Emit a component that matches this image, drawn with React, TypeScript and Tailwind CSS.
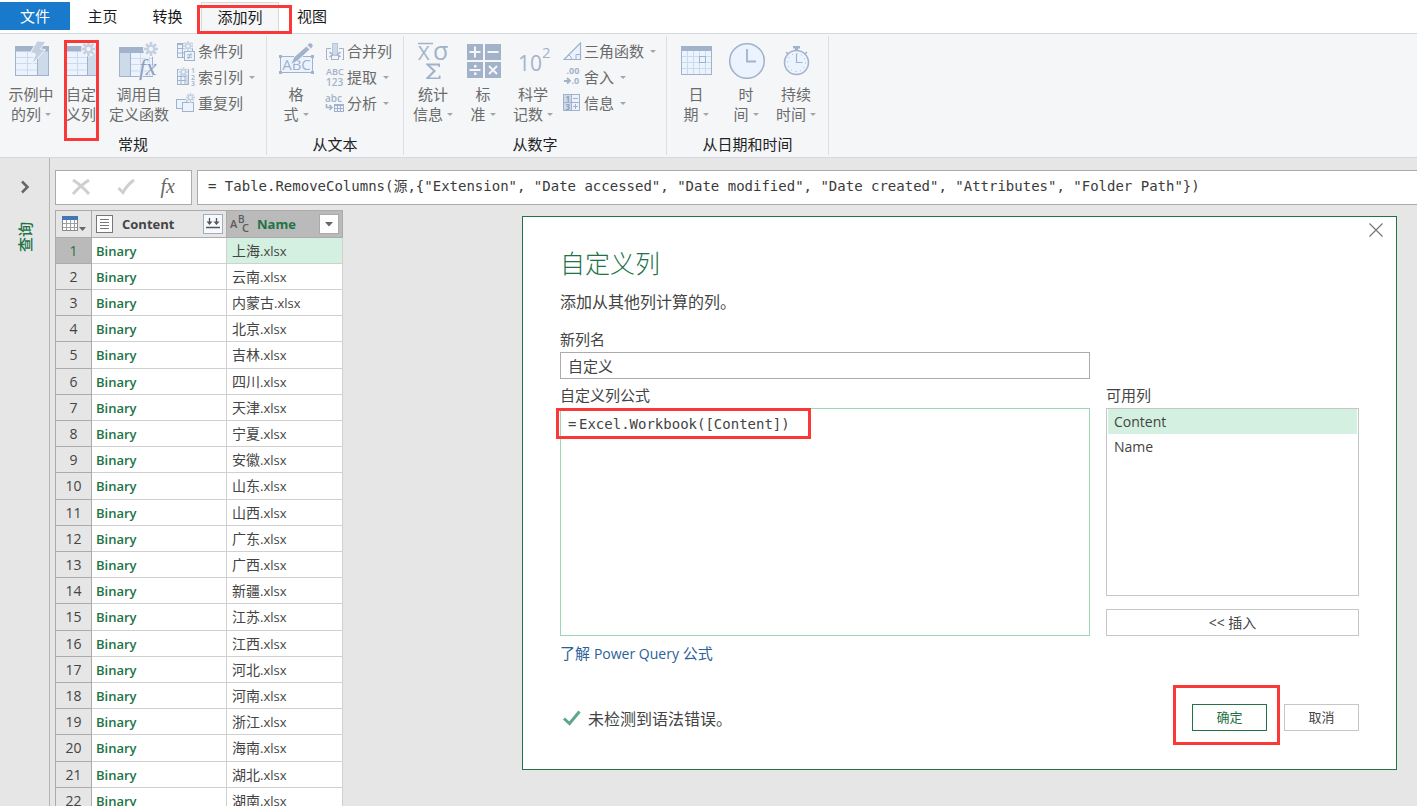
import React from "react";

const DARK = "#a3b2cb";
const MID = "#cddaea";
const LIGHT = "#eaf3fe";

function Spark({ x, y, r = 7 }: { x: number; y: number; r?: number }) {
  return (
    <g stroke="#c3d0e2" strokeWidth={r > 5 ? 2.6 : 1.6}>
      <circle cx={x} cy={y} r={r * 0.45} fill="none" strokeWidth={r * 0.28} />
      {[0, 45, 90, 135, 180, 225, 270, 315].map((a) => (
        <line key={a} x1={x} y1={y - r * 0.5} x2={x} y2={y - r} transform={`rotate(${a} ${x} ${y})`} />
      ))}
    </g>
  );
}

function Big({ children }: { children: React.ReactNode }) {
  return (
    <svg className="h-10 w-10 shrink-0 overflow-visible" viewBox="0 0 40 40" fill="none" aria-hidden="true">
      {children}
    </svg>
  );
}

function Small({ children }: { children: React.ReactNode }) {
  return (
    <svg className="h-5 w-5 shrink-0 overflow-visible" viewBox="0 0 20 20" fill="none" aria-hidden="true">
      {children}
    </svg>
  );
}

const ExampleIcon = () => (
  <Big>
    <rect x="4.5" y="7.5" width="33" height="28" fill={LIGHT} stroke={DARK} />
    <rect x="27" y="8" width="10" height="27" fill={MID} />
    <path d="M5 17.5h22M5 23.5h22M5 30h22M16.5 12v23" stroke={MID} />
    <path d="M26.5 12v23" stroke={DARK} />
    <rect x="4" y="6" width="34" height="5.5" fill={DARK} />
    <path d="M26 1L35 1.5L29.5 9L34.5 9.5L20.5 25L24.5 14L19.5 12.5Z" fill="#c3d0e2" stroke="#f4f6f8" />
  </Big>
);

const CustomIcon = () => (
  <Big>
    <rect x="3.5" y="7.5" width="33" height="28" fill={LIGHT} stroke={DARK} />
    <rect x="27" y="8" width="9" height="27" fill={MID} />
    <path d="M4 17.5h22M4 23.5h22M4 30h22M16.5 12v23" stroke={MID} />
    <path d="M26.5 12v23" stroke={DARK} />
    <rect x="3" y="6" width="34" height="5.5" fill={DARK} />
    <circle cx="27.5" cy="9" r="7.5" fill="#f4f6f8" />
    <Spark x={27.5} y={9} />
  </Big>
);

const InvokeIcon = () => (
  <Big>
    <rect x="0.5" y="8.5" width="33" height="28" fill={LIGHT} stroke={DARK} />
    <rect x="1" y="12" width="10" height="24" fill={MID} />
    <path d="M12 18.5h21M12 24.5h21M12 31h21M21.5 13v23M30.5 13v23" stroke={MID} />
    <path d="M11.5 13v23" stroke={DARK} />
    <rect x="0" y="7" width="34" height="6" fill={DARK} />
    <circle cx="32" cy="9" r="8" fill="#f4f6f8" />
    <Spark x={32} y={9} />
    <text x="20" y="34.500" fontFamily="Liberation Serif, serif" fontStyle="italic" fontSize="24" fill="#8f9fba" stroke="#eaf1fa" strokeWidth="1.500" paintOrder="stroke">fx</text>
  </Big>
);

const FormatIcon = () => (
  <Big>
    <rect x="4.5" y="16.5" width="32" height="16" fill={LIGHT} stroke={DARK} />
    <text x="20.500" y="30" textAnchor="middle" fontFamily="Open Sans, sans-serif" fontSize="15" fontWeight="500" fill={DARK}>ABC</text>
    <path d="M3 15h3v3H3zM35 15h3v3h-3zM3 31h3v3H3zM35 31h3v3h-3z" fill={DARK} />
    <path d="M14.500 25L18 17L30.500 6L34 9.500L21.500 21Z" fill={DARK} stroke="#f4f6f8" strokeWidth="1" />
    <path d="M31.500 5L33.500 3.200Q37 3 36.500 6.500L35 8.500Z" fill={DARK} />
  </Big>
);

const StatsIcon = () => (
  <Big>
    <path d="M5 3.500h15" stroke={DARK} strokeWidth="1.500" />
    <text x="5" y="20" fontFamily="Open Sans, sans-serif" fontSize="20" fontWeight="500" fill={DARK}>X</text>
    <text x="20" y="20" fontFamily="Open Sans, sans-serif" fontSize="25" fontWeight="500" fill={DARK}>σ</text>
    <path d="M13 23.500h14v3.500h-1.500l-.5-1.500h-8l6 5.500-6.500 6.500h9l.5-2h1.500v3.500H13v-1l7-7-7-6.500z" fill={DARK} />
  </Big>
);

const StandardIcon = () => (
  <Big>
    <path d="M4 4h16v16H4zM22 4h16v16H22zM4 22h16v16H4zM22 22h16v16H22z" fill={DARK} />
    <path d="M6.500 12h11M12 6.500v11M24.500 12h11M6.500 30h11M26 26l8 8M34 26l-8 8" stroke="#f4f6f8" strokeWidth="2" />
    <path d="M11 25h2.500v2.500H11zM11 32.500h2.500v2.500H11z" fill="#f4f6f8" />
  </Big>
);

const ScientificIcon = () => (
  <Big>
    <text x="5" y="31" fontFamily="Open Sans, sans-serif" fontSize="21" fontWeight="500" fill={DARK}>10</text>
    <text x="29" y="18" fontFamily="Open Sans, sans-serif" fontSize="15" fontWeight="500" fill={DARK}>2</text>
  </Big>
);

const DateIcon = () => (
  <Big>
    <rect x="5.500" y="7.500" width="30" height="27" fill={LIGHT} stroke={DARK} />
    <path d="M6 16.500h29M6 22.500h29M6 28.500h29M11.500 11v23M17.500 11v23M23.500 11v23M29.500 11v23" stroke={MID} />
    <rect x="5" y="6" width="31" height="5" fill={DARK} />
    <rect x="23.500" y="16.500" width="6" height="6" stroke={DARK} />
  </Big>
);

const TimeIcon = () => (
  <Big>
    <circle cx="21" cy="21" r="17.300" fill={LIGHT} stroke={DARK} strokeWidth="1.600" />
    <path d="M21 9v12.500h9" stroke={DARK} strokeWidth="1.800" />
  </Big>
);

const DurationIcon = () => (
  <Big>
    <path d="M17 6h7v2.500h-2v2h-3v-2h-2z" fill={DARK} />
    <circle cx="20.500" cy="22.500" r="12" fill={LIGHT} stroke={DARK} strokeWidth="1.500" />
    <circle cx="20.500" cy="22.500" r="9" stroke={DARK} strokeWidth="1" strokeDasharray="1 3.700" />
    <path d="M20.500 14v8.500h6" stroke={DARK} strokeWidth="1.200" />
    <path d="M10 12l2 2M31 12l-2 2" stroke={DARK} strokeWidth="1.500" />
  </Big>
);

const ConditionIcon = () => (
  <Small>
    <rect x="1.500" y="2.500" width="15" height="14" fill={LIGHT} stroke={DARK} />
    <path d="M6.500 3v13M2 7.500h14M2 12h14M11.500 3v13" stroke={DARK} />
    <path d="M1 2h6v2H1z" fill={DARK} />
    <circle cx="12" cy="5" r="5" fill="#f4f6f8" />
    <Spark x={12} y={5} r={5} />
    <rect x="8.500" y="10.500" width="10" height="9" fill={LIGHT} stroke={DARK} />
    <path d="M11 13.800h5M11 16.300h5M15 12l-3 6" stroke={DARK} />
  </Small>
);

const IndexIcon = () => (
  <Small>
    <rect x="1.500" y="2.500" width="11" height="15" fill={LIGHT} stroke={DARK} />
    <path d="M5 3v14M9 3v14M2 9.500h10M2 13.500h10" stroke={DARK} />
    <path d="M10 8h2v9h-2z" fill={MID} />
    <rect x="3" y="1" width="9" height="7" fill="#f4f6f8" opacity=".7" />
    <Spark x={7.5} y={5} r={4.5} />
    <g fontFamily="Open Sans, sans-serif" fontSize="7" fontWeight="600" fill={DARK}>
      <text x="15" y="6">1</text>
      <text x="15" y="12.500">2</text>
      <text x="15" y="19">3</text>
    </g>
  </Small>
);

const DuplicateIcon = () => (
  <Small>
    <rect x="0.500" y="6.500" width="10" height="9" fill={LIGHT} stroke={DARK} />
    <rect x="6.500" y="9.500" width="11" height="9" fill={LIGHT} stroke={DARK} />
    <circle cx="14.500" cy="4.500" r="5" fill="#f4f6f8" />
    <Spark x={14.5} y={4.5} r={4.5} />
  </Small>
);

const MergeIcon = () => (
  <Small>
    <path d="M6 7.500H1.500V18.500M14 7.500h4.500V18.500M6.500 18.500h7M1.500 18.500H3M17 18.500h2" stroke={DARK} />
    <rect x="7.500" y="2.500" width="5" height="12" fill={MID} stroke="#b8c6da" />
    <path d="M4.500 11l3 2.500-3 2.500M15.500 11l-3 2.500 3 2.500" stroke={DARK} strokeWidth="1.500" />
    <path d="M6.500 15v4M13.500 15v4" stroke={DARK} />
  </Small>
);

const ExtractIcon = () => (
  <Small>
    <g fontFamily="Open Sans, sans-serif" fontWeight="600" fill={DARK}>
      <text x="1" y="8" fontSize="9">ABC</text>
      <text x="1" y="19" fontSize="10">123</text>
    </g>
  </Small>
);

const ParseIcon = () => (
  <Small>
    <text x="0" y="8.500" fontFamily="Open Sans, sans-serif" fontSize="10" fontWeight="600" fill={DARK}>abc</text>
    <path d="M1.500 11v3.500h5M4.500 12l2.500 2.500L4.500 17" stroke={DARK} strokeWidth="1.500" />
    <rect x="9.500" y="11.500" width="9" height="7" fill={LIGHT} stroke={DARK} />
    <path d="M9 11h10v2H9z" fill={DARK} />
    <path d="M9 15.500h10M12.500 12v7M15.500 12v7" stroke={DARK} />
  </Small>
);

const TrigIcon = () => (
  <Small>
    <path d="M2 18.500L18.500 2v16.500z" fill={LIGHT} stroke={DARK} strokeWidth="1.200" />
    <path d="M18 13.500h-4v5M7 14q2.500 1.500 2.500 4" stroke={DARK} />
  </Small>
);

const RoundIcon = () => (
  <Small>
    <g fontFamily="Open Sans, sans-serif" fontSize="9" fontWeight="700" fill={DARK}>
      <text x="4.500" y="7">.00</text>
      <text x="9.500" y="17">.0</text>
    </g>
    <path d="M2 14h5M5 11l3 2.800L5 16.500" stroke={DARK} strokeWidth="1.800" />
  </Small>
);

const InfoIcon = () => (
  <Small>
    <rect x="1.500" y="1.500" width="16" height="16" fill={LIGHT} stroke={DARK} />
    <path d="M2 2h7v15H2z" fill={MID} />
    <path d="M9.500 2v15M2 9.500h15M11 5.500h5M11 13.500h5M13.500 11v5" stroke={DARK} />
    <g fontFamily="Open Sans, sans-serif" fontSize="8" fontWeight="700" fill="#8f9fba">
      <text x="3.500" y="8.500">1</text>
      <text x="3.500" y="16.500">3</text>
    </g>
  </Small>
);

function Caret() {
  return (
    <svg className="h-[3px] w-[6px] shrink-0" viewBox="0 0 6 3" aria-hidden="true">
      <path d="M0 0h6L3 3z" fill="#a6a6a6" />
    </svg>
  );
}

type BigProps = { icon: React.ReactNode; top: string; bottom: string; caret?: boolean; wide?: boolean; marked?: boolean };

function BigButton({ icon, top, bottom, caret, wide, marked }: BigProps) {
  return (
    <button
      type="button"
      className={`relative flex h-[101px] flex-col items-center text-[15px] leading-5 whitespace-nowrap text-[#6b6b6b] ${wide ? "w-[66px]" : "w-[50px]"}`}
    >
      {icon}
      <span className="mt-1">{top}</span>
      <span className="flex items-center gap-1">
        {bottom}
        {caret && <Caret />}
      </span>
      {marked && <span className="absolute inset-y-0 right-[7px] left-2 border-3 border-[#fb3838]" />}
    </button>
  );
}

function SmallButton({ icon, label, caret }: { icon: React.ReactNode; label: string; caret?: boolean }) {
  return (
    <button type="button" className="flex h-[26px] items-center gap-[2px] text-[15px] leading-5 whitespace-nowrap text-[#6b6b6b]">
      {icon}
      <span>{label}</span>
      {caret && (
        <span className="ml-1">
          <Caret />
        </span>
      )}
    </button>
  );
}

function Group({ label, className, children }: { label: string; className: string; children: React.ReactNode }) {
  return (
    <section aria-label={label} className={`my-[2px] flex shrink-0 flex-col border-r border-[#dcdfe3] pt-1 ${className}`}>
      <div className="flex h-[93px] pl-1">{children}</div>
      <div className="flex h-6 items-center justify-center text-[15px] text-[#222]">{label}</div>
    </section>
  );
}

function Ribbon() {
  return (
    <header className="shrink-0">
      <nav className="relative flex h-[34px] border-b border-[#d5d8dc] bg-white text-[15px] text-[#1a1a1a]">
        <button type="button" className="mt-[2px] mb-[3px] w-[70px] bg-[#1979ca] text-white">文件</button>
        <button type="button" className="w-[65px]">主页</button>
        <button type="button" className="mr-px w-[65px]">转换</button>
        <button type="button" className="relative -mb-px mt-[2px] w-[78px] border border-b-0 border-[#d5d8dc] bg-[#f4f6f8] pb-[3px]">
          添加列
          <span className="absolute top-[2px] -right-[14px] bottom-0 -left-[5px] border-3 border-[#fb3838]" />
        </button>
        <button type="button" className="w-[66px]">视图</button>
      </nav>
      <div className="flex h-[124px] border-b border-[#d5d8dc] bg-[#f4f6f8]">
        <Group label="常规" className="w-[267px]">
          <div className="ml-[2px] flex">
            <BigButton icon={<ExampleIcon />} top="示例中" bottom="的列" caret />
            <BigButton icon={<CustomIcon />} top="自定" bottom="义列" marked />
            <BigButton icon={<InvokeIcon />} top="调用自" bottom="定义函数" wide />
          </div>
          <div className="-mt-[2px] ml-1">
            <SmallButton icon={<ConditionIcon />} label="条件列" />
            <SmallButton icon={<IndexIcon />} label="索引列" caret />
            <SmallButton icon={<DuplicateIcon />} label="重复列" />
          </div>
        </Group>
        <Group label="从文本" className="w-[137px]">
          <BigButton icon={<FormatIcon />} top="格" bottom="式" caret />
          <div className="-mt-[2px] ml-1">
            <SmallButton icon={<MergeIcon />} label="合并列" />
            <SmallButton icon={<ExtractIcon />} label="提取" caret />
            <SmallButton icon={<ParseIcon />} label="分析" caret />
          </div>
        </Group>
        <Group label="从数字" className="w-[263px]">
          <BigButton icon={<StatsIcon />} top="统计" bottom="信息" caret />
          <BigButton icon={<StandardIcon />} top="标" bottom="准" caret />
          <BigButton icon={<ScientificIcon />} top="科学" bottom="记数" caret />
          <div className="-mt-[2px] ml-1">
            <SmallButton icon={<TrigIcon />} label="三角函数" caret />
            <SmallButton icon={<RoundIcon />} label="舍入" caret />
            <SmallButton icon={<InfoIcon />} label="信息" caret />
          </div>
        </Group>
        <Group label="从日期和时间" className="w-[162px]">
          <BigButton icon={<DateIcon />} top="日" bottom="期" caret />
          <BigButton icon={<TimeIcon />} top="时" bottom="间" caret />
          <BigButton icon={<DurationIcon />} top="持续" bottom="时间" caret />
        </Group>
      </div>
    </header>
  );
}

function Sidebar() {
  return (
    <aside className="flex w-[50px] shrink-0 flex-col items-center border-r border-[#b5b5b5] pt-[21px]">
      <button type="button" aria-label="展开" className="flex h-4 w-4 items-center justify-center">
        <svg className="h-4 w-4" viewBox="0 0 16 16" fill="none">
          <path d="M5 2.500L10.500 8L5 13.500" stroke="#666" strokeWidth="2.500" />
        </svg>
      </button>
      <button type="button" className="mt-[27px] rotate-180 text-[15px] leading-5 font-medium text-[#217346] [text-orientation:sideways] [writing-mode:vertical-rl]">
        查询
      </button>
    </aside>
  );
}

function FormulaBar() {
  return (
    <div className="mb-[5px] flex h-[35px] gap-[5px]">
      <div className="flex w-[137px] items-center justify-between border border-[#ababab] bg-white pr-4 pl-[15px]">
        <button type="button" aria-label="取消编辑">
          <svg className="h-5 w-5" viewBox="0 0 20 20" fill="none">
            <path d="M2 2Q10 7 18 16M18 2Q10 7 2 16" stroke="#cfcfcf" strokeWidth="3" />
          </svg>
        </button>
        <button type="button" aria-label="确认编辑">
          <svg className="h-5 w-5" viewBox="0 0 20 20" fill="none">
            <path d="M2.500 10L7 14.500Q11 7 18 2" stroke="#cfcfcf" strokeWidth="3" />
          </svg>
        </button>
        <button type="button" aria-label="函数" className="pb-[3px] font-['Liberation_Serif',serif] text-xl leading-5 text-[#666] italic">
          fx
        </button>
      </div>
      <input
        aria-label="公式"
        className="min-w-0 flex-1 border border-r-0 border-[#ababab] bg-white pb-[3px] pl-[10px] font-['DejaVu_Sans_Mono','Noto_Sans_CJK_SC',monospace] text-sm text-[#3b3b3b] outline-none"
        defaultValue={'= Table.RemoveColumns(源,{"Extension", "Date accessed", "Date modified", "Date created", "Attributes", "Folder Path"})'}
      />
    </div>
  );
}

const provinces = [
  "上海", "云南", "内蒙古", "北京", "吉林", "四川", "天津", "宁夏", "安徽", "山东", "山西",
  "广东", "广西", "新疆", "江苏", "江西", "河北", "河南", "浙江", "海南", "湖北", "湖南",
];

function DataTable() {
  return (
    <table className="w-[288px] table-fixed border-separate border-spacing-0 border-t border-l border-[#ababab] text-[13px] leading-5 text-[#444]">
      <colgroup>
        <col className="w-9" />
        <col className="w-[135px]" />
        <col className="w-[116px]" />
      </colgroup>
      <thead>
        <tr className="h-[27px]">
          <th className="border-r border-b border-[#ababab] bg-[#e6e6e6] p-0 pl-[6px]">
            <button type="button" aria-label="表选项" className="flex items-center">
              <svg className="h-4 w-[25px]" viewBox="0 0 25 16" fill="none">
                <rect x=".5" y="1.500" width="15" height="13" fill="#fff" stroke="#8a8a8a" />
                <path d="M4.500 4v10M8.500 4v10M12.500 4v10M1 7.500h14M1 11.500h14" stroke="#a0a0a0" />
                <path d="M0 0h16v4H0z" fill="#4179b5" />
                <path d="M17 11h7l-3.500 4z" fill="#666" />
              </svg>
            </button>
          </th>
          <th className="border-r border-b border-[#ababab] bg-[#e6e6e6] p-0">
            <div className="flex items-center pr-[3px] pl-1">
              <svg className="h-[18px] w-[17px]" viewBox="0 0 17 18" fill="none">
                <rect x=".5" y=".5" width="16" height="17" fill="#fff" stroke="#777" />
                <path d="M4 4.500h9M4 7.500h9M4 10.500h9M4 13.500h9" stroke="#777" />
              </svg>
              <span className="ml-[9px] flex-1 text-left font-bold">Content</span>
              <button type="button" aria-label="合并文件">
                <svg className="h-5 w-5" viewBox="0 0 20 20" fill="none">
                  <rect x=".5" y=".5" width="19" height="19" fill="#f7fafd" stroke="#a5adb8" />
                  <path d="M3 13.500h14M6.500 4v5M13.500 4v5" stroke="#555" strokeWidth="1.300" />
                  <path d="M3.500 7.500h6l-3 3.500zM10.500 7.500h6l-3 3.500z" fill="#555" />
                </svg>
              </button>
            </div>
          </th>
          <th className="border-r border-b border-[#ababab] bg-[#bababa] p-0">
            <div className="flex items-center pr-[3px] pl-[3px]">
              <svg className="h-5 w-5 overflow-visible" viewBox="0 0 20 20" fill="#5a5a5a" fontFamily="Open Sans, sans-serif" fontWeight="600" fontSize="11">
                <text x="0" y="14">A</text>
                <text x="8" y="9" fontSize="10">B</text>
                <text x="12" y="18" fontSize="11">C</text>
              </svg>
              <span className="ml-[7px] flex-1 text-left font-bold text-[#217346]">Name</span>
              <button type="button" aria-label="筛选">
                <svg className="h-5 w-5" viewBox="0 0 20 20" fill="none">
                  <rect x=".5" y=".5" width="19" height="19" fill="#fff" stroke="#ababab" />
                  <path d="M6 8h8l-4 4.500z" fill="#666" />
                </svg>
              </button>
            </div>
          </th>
        </tr>
      </thead>
      <tbody>
        {provinces.map((name, i) => (
          <tr key={name} className="h-[26px] nth-[5n]:h-[27px]">
            <th scope="row" className={`border-r border-b border-[#ababab] p-0 text-center text-sm font-normal ${i === 0 ? "bg-[#bababa] text-[#217346]" : "bg-[#e6e6e6]"}`}>
              {i + 1}
            </th>
            <td className="border-r border-b border-[#d0d0d0] bg-white p-0 pl-1 font-semibold text-[#217346]">Binary</td>
            <td className={`border-r border-b border-[#d0d0d0] p-0 pl-[5px] ${i === 0 ? "bg-[#d3f0e0]" : "bg-white"}`}>
              <span className="text-sm leading-5">{name}</span>
              <span className="font-medium">.xlsx</span>
            </td>
          </tr>
        ))}
      </tbody>
    </table>
  );
}

function CustomColumnDialog() {
  return (
    <div role="dialog" aria-labelledby="dialog-title" className="absolute top-[216px] right-5 left-[522px] border border-[#217346] bg-white px-[37px] pt-7 pb-[38px] text-[15px] leading-5 text-[#444]">
      <button type="button" aria-label="关闭" className="absolute top-[5px] right-3">
        <svg className="h-4 w-4" viewBox="0 0 16 16" fill="none">
          <path d="M1.500 1.500l13 13M14.500 1.500l-13 13" stroke="#777" strokeWidth="1.200" />
        </svg>
      </button>
      <h1 id="dialog-title" className="text-[25px] leading-9 font-light text-[#217346]">自定义列</h1>
      <p className="mt-[9px] text-base">添加从其他列计算的列。</p>
      <div className="mt-[15px] grid grid-cols-[minmax(0,1fr)_253px] gap-x-4">
        <div className="flex flex-col">
          <label htmlFor="column-name">新列名</label>
          <input id="column-name" defaultValue="自定义" className="mt-[3px] h-[27px] border border-[#ababab] pb-px pl-[7px] outline-none" />
        </div>
        <div />
        <div className="mt-[6px] flex flex-col">
          <label htmlFor="formula">自定义列公式</label>
          <div className="relative mt-[3px] flex h-[228px] border border-[#9bd8b5] pt-[5px] pl-[7px] font-['DejaVu_Sans_Mono','Noto_Sans_CJK_SC',monospace] text-sm leading-5">
            <span className="w-[11px]">=</span>
            <textarea id="formula" spellCheck={false} defaultValue="Excel.Workbook([Content])" className="min-w-0 flex-1 resize-none outline-none" />
            <span className="pointer-events-none absolute -top-px -left-[5px] h-[31px] w-[255px] border-3 border-[#fb3838]" />
          </div>
        </div>
        <div className="mt-[6px] flex flex-col">
          <span id="columns-label">可用列</span>
          <ul role="listbox" aria-labelledby="columns-label" className="mt-[3px] h-[188px] border border-[#c6c6c6] p-px pt-0 text-sm leading-[25px]">
            <li role="option" aria-selected="true" className="bg-[#d3f0e0] pl-[6px]">Content</li>
            <li role="option" aria-selected="false" className="pl-[6px]">Name</li>
          </ul>
          <button type="button" className="mt-[13px] h-[27px] border border-[#c6c6c6] text-sm">&lt;&lt; 插入</button>
        </div>
      </div>
      <a href="#formulas" className="mt-[7px] block w-fit text-[#2b6198]">
        了解 <span className="text-sm">Power Query</span> 公式
      </a>
      <div className="mt-10 flex h-[27px] items-center">
        <svg className="ml-[2px] h-5 w-5" viewBox="0 0 20 20" fill="none" aria-hidden="true">
          <path d="M2 10.500L7.500 15.500L17.500 3.500" stroke="#62a58c" strokeWidth="3" />
        </svg>
        <span className="ml-[6px] flex-1 pt-[2px] text-base">未检测到语法错误。</span>
        <button type="button" className="relative h-[27px] w-[75px] border border-[#217346] pb-px text-[13px] text-[#217346]">
          确定
          <span className="absolute -top-5 right-[-14px] -bottom-[15px] -left-5 border-3 border-[#fb3838]" />
        </button>
        <button type="button" className="ml-[17px] h-[27px] w-[75px] border border-[#c6c6c6] pb-px text-[13px]">取消</button>
      </div>
    </div>
  );
}

export default function App() {
  return (
    <div lang="zh-CN" className="relative flex h-screen flex-col overflow-hidden bg-[#e6e6e6] font-['Open_Sans','Noto_Sans_CJK_SC',sans-serif]">
      <Ribbon />
      <div className="flex min-h-0 flex-1">
        <Sidebar />
        <main className="min-w-0 flex-1 overflow-hidden pt-3 pl-[5px]">
          <FormulaBar />
          <DataTable />
        </main>
      </div>
      <CustomColumnDialog />
    </div>
  );
}
